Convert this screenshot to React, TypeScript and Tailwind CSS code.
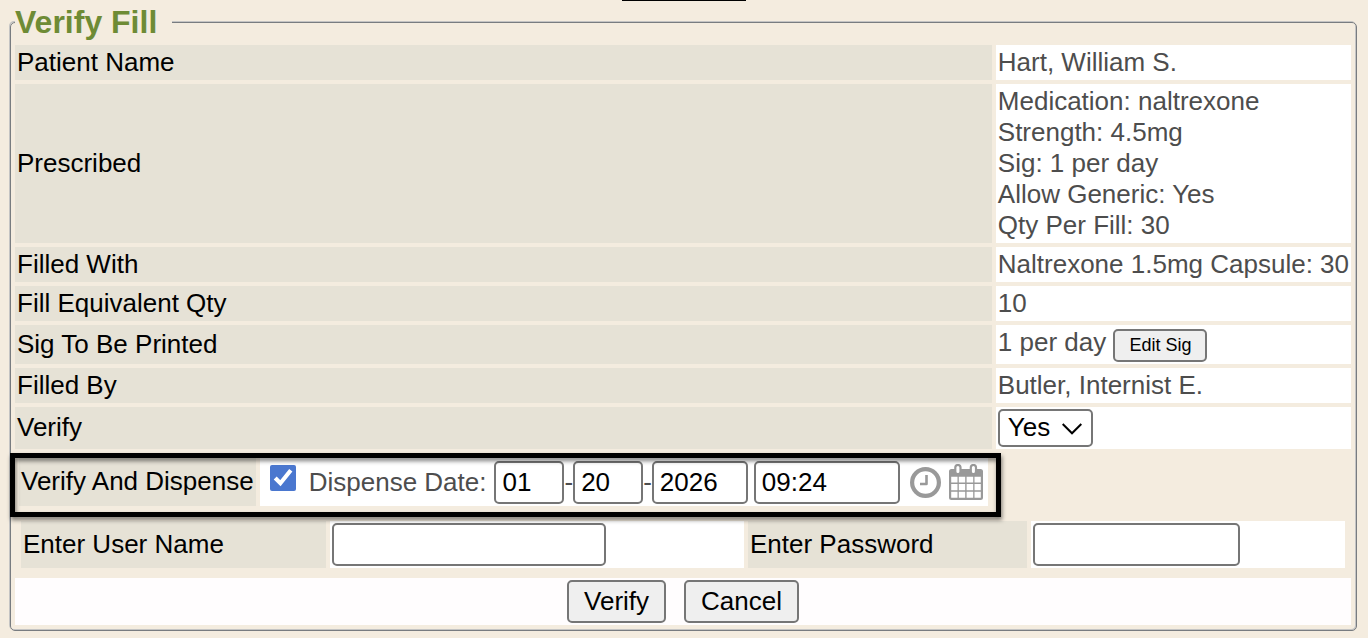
import type { ReactNode } from 'react';

const prescribed = [
  'Medication: naltrexone',
  'Strength: 4.5mg',
  'Sig: 1 per day',
  'Allow Generic: Yes',
  'Qty Per Fill: 30',
];

const fieldClass = 'h-[43px] rounded-[5px] border-2 border-[#767676] bg-white px-1.5 text-black';
const buttonClass = 'h-[43px] rounded-[5px] border-2 border-[#767676] bg-[#efefef] px-[15px] text-black';

function Row({ label, children }: { label: ReactNode; children: ReactNode }) {
  return (
    <tr>
      <th scope="row" className="w-full bg-[#e6e2d6] p-0.5 text-left font-normal text-black">
        {label}
      </th>
      <td className="whitespace-nowrap bg-white p-0.5">{children}</td>
    </tr>
  );
}

function ClockIcon() {
  return (
    <svg viewBox="0 0 31 31" className="size-[31px]" fill="none" stroke="#999" aria-hidden="true">
      <circle cx="15.5" cy="15.5" r="13.4" strokeWidth="4.2" />
      <path d="M16.5 8v9H10" strokeWidth="2.6" strokeLinejoin="round" />
    </svg>
  );
}

function CalendarIcon() {
  return (
    <svg viewBox="0 0 34 36" className="h-9 w-[34px]" aria-hidden="true">
      <path
        fill="#999"
        fillRule="evenodd"
        d="M2.5 5H31.5Q34 5 34 7.5V33.5Q34 36 31.5 36H2.5Q0 36 0 33.5V7.5Q0 5 2.5 5ZM2.2 12.8V18.5H8.5V12.8ZM9.8 12.8V18.5H16.2V12.8ZM17.6 12.8V18.5H24.2V12.8ZM25.5 12.8V18.5H31.8V12.8ZM2.2 20V26.3H8.5V20ZM9.8 20V26.3H16.2V20ZM17.6 20V26.3H24.2V20ZM25.5 20V26.3H31.8V20ZM2.2 27.7V33.8H8.5V27.7ZM9.8 27.7V33.8H16.2V27.7ZM17.6 27.7V33.8H24.2V27.7ZM25.5 27.7V33.8H31.8V27.7Z"
      />
      <rect x="6.3" y="1" width="5.2" height="9" rx="2.6" fill="#fff" stroke="#999" strokeWidth="2.2" />
      <rect x="21.8" y="1" width="5.2" height="9" rx="2.6" fill="#fff" stroke="#999" strokeWidth="2.2" />
    </svg>
  );
}

export default function App() {
  return (
    <div className="min-h-screen bg-[#f4ecdf] pb-[7px] font-['Liberation_Sans',Arial,sans-serif] text-[26px] leading-[31px] text-[#4d4d4d]">
      <div className="mx-auto h-px w-[124px] bg-black" />

      <form onSubmit={(e) => e.preventDefault()}>
        <fieldset className="mt-[3px] mr-[11px] ml-2.5 min-w-0 rounded-[5px] border border-[#787c80] pr-px pb-[5px] shadow-[-1px_-1px_0_#c4c4c4,inset_-1px_-1px_0_#c4c4c4]">
          <legend className="ml-1 bg-[#f4ecdf] pr-[15px] text-[32px] leading-[37px] font-bold text-[#6e8b35]">
            Verify Fill
          </legend>

          <table className="w-full border-separate border-spacing-1">
            <tbody>
              <Row label="Patient Name">Hart, William S.</Row>
              <Row label="Prescribed">
                {prescribed.map((line) => (
                  <div key={line}>{line}</div>
                ))}
              </Row>
              <Row label="Filled With">Naltrexone 1.5mg Capsule: 30</Row>
              <Row label="Fill Equivalent Qty">10</Row>
              <Row label="Sig To Be Printed">
                1 per day{' '}
                <button
                  type="button"
                  className="h-[33px] rounded-[5px] border-2 border-[#767676] bg-[#efefef] px-3.5 text-lg leading-5 text-black"
                >
                  Edit Sig
                </button>
              </Row>
              <Row label="Filled By">Butler, Internist E.</Row>
              <Row label={<label htmlFor="verify">Verify</label>}>
                <div className="relative w-fit">
                  <select
                    id="verify"
                    defaultValue="Yes"
                    className="block h-[38px] w-[95px] appearance-none rounded-[5px] border-2 border-[#767676] bg-white pl-2 text-black"
                  >
                    <option>Yes</option>
                    <option>No</option>
                  </select>
                  <svg
                    viewBox="0 0 20 12"
                    className="pointer-events-none absolute top-3.5 right-[11px] h-3 w-5"
                    fill="none"
                    stroke="#000"
                    strokeWidth="2"
                    aria-hidden="true"
                  >
                    <path d="M0.7 1L10 10.3L19.3 1" />
                  </svg>
                </div>
              </Row>
            </tbody>
          </table>

          {/* Dispense row, framed */}
          <div className="relative -ml-px w-fit p-[5px]">
            <div className="flex gap-1 pr-2 pb-1.5 pl-1 whitespace-nowrap">
              <label htmlFor="dispense" className="flex items-center bg-[#e6e2d6] px-0.5 text-black">
                Verify And Dispense
              </label>
              <div className="flex items-baseline bg-white pt-[3px] pr-[5px] pb-0.5 pl-2.5">
                <input id="dispense" type="checkbox" defaultChecked className="size-[26px] accent-[#4a77cf]" />
                <label htmlFor="month" className="mr-2 ml-[13px]">
                  Dispense Date:
                </label>
                <input id="month" aria-label="Month" defaultValue="01" className={`${fieldClass} w-[70px]`} />
                <span>-</span>
                <input aria-label="Day" defaultValue="20" className={`${fieldClass} w-[70px]`} />
                <span>-</span>
                <input aria-label="Year" defaultValue="2026" className={`${fieldClass} w-24`} />
                <input aria-label="Time" defaultValue="09:24" className={`${fieldClass} ml-1.5 w-[146px]`} />
                <button type="button" aria-label="Set time to now" className="ml-2.5 self-center">
                  <ClockIcon />
                </button>
                <button type="button" aria-label="Pick a date" className="ml-2 self-center">
                  <CalendarIcon />
                </button>
              </div>
            </div>
            <div className="pointer-events-none absolute inset-0 border-5 border-black drop-shadow-[1px_3px_2px_rgba(0,0,0,0.5)]" />
          </div>

          <div className="mx-2.5 mt-1 grid grid-cols-[305fr_414fr_279fr_314fr] gap-1">
            <label htmlFor="user" className="flex items-center bg-[#e6e2d6] p-0.5 text-black">
              Enter User Name
            </label>
            <div className="bg-white p-0.5">
              <input id="user" className={`${fieldClass} block w-[274px]`} />
            </div>
            <label htmlFor="password" className="flex items-center bg-[#e6e2d6] p-0.5 text-black">
              Enter Password
            </label>
            <div className="bg-white p-0.5">
              <input id="password" type="password" className={`${fieldClass} block w-[207px]`} />
            </div>
          </div>

          <div className="mx-1 mt-2.5 flex justify-center gap-[18px] bg-[#fffdfe] p-0.5">
            <button type="submit" className={buttonClass}>
              Verify
            </button>
            <button type="button" className={buttonClass}>
              Cancel
            </button>
          </div>
        </fieldset>
      </form>
    </div>
  );
}
